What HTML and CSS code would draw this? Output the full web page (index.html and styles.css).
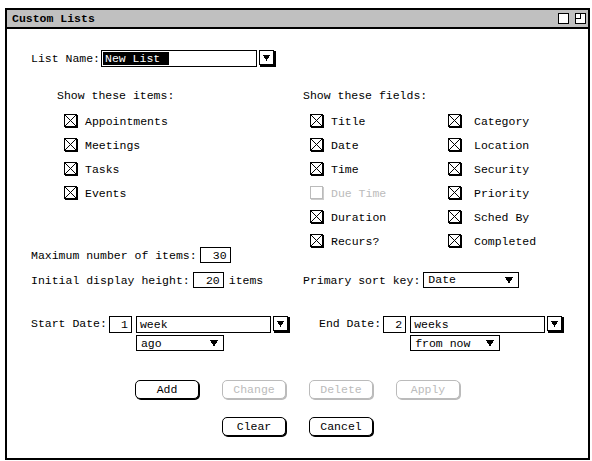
FILE: index.html
```html
<!DOCTYPE html>
<html lang="en">
<head>
    <meta charset="UTF-8">
    <title>Custom Lists</title>
    <link rel="stylesheet" href="styles.css">
</head>
<body>
    <div class="window">
        <div class="titlebar">
            <span class="title">Custom Lists</span>
            <span class="wicons">
                <svg width="11" height="11" viewBox="0 0 11 11"><rect x="0.5" y="0.5" width="10" height="10" fill="#fff" stroke="#000"/></svg>
                <svg width="11" height="11" viewBox="0 0 11 11"><rect x="0.5" y="0.5" width="10" height="10" fill="#fff" stroke="#000"/><path d="M5.5 0.5 V5.5 H0.5" fill="none" stroke="#000"/></svg>
            </span>
        </div>

        <div class="form">
            <div class="name-row">
                <span class="label">List Name:</span>
                <span class="field name-field"><span class="sel">New List</span></span>
                <span class="drop">
                    <svg width="17" height="17" viewBox="0 0 17 17"><rect x="0.5" y="0.5" width="14" height="14" fill="#fff" stroke="#000"/><rect x="15" y="1" width="2" height="16"/><rect x="1" y="15" width="16" height="2"/><polygon points="4,5 11,5 7.5,11"/></svg>
                </span>
            </div>

            <div class="main">
                <div class="left-top">
                    <div class="group">
                        <div class="group-head">Show these items:</div>
                        <div class="check"><svg class="cb" width="14" height="14" viewBox="0 0 14 14"><rect x="0.5" y="0.5" width="12" height="12" fill="#fff" stroke="#000"/><path d="M13.5 1 V14 M1 13.5 H14 M1 1 L12 12 M12 1 L1 12" stroke="#000" fill="none"/></svg>Appointments</div>
                        <div class="check"><svg class="cb" width="14" height="14" viewBox="0 0 14 14"><rect x="0.5" y="0.5" width="12" height="12" fill="#fff" stroke="#000"/><path d="M13.5 1 V14 M1 13.5 H14 M1 1 L12 12 M12 1 L1 12" stroke="#000" fill="none"/></svg>Meetings</div>
                        <div class="check"><svg class="cb" width="14" height="14" viewBox="0 0 14 14"><rect x="0.5" y="0.5" width="12" height="12" fill="#fff" stroke="#000"/><path d="M13.5 1 V14 M1 13.5 H14 M1 1 L12 12 M12 1 L1 12" stroke="#000" fill="none"/></svg>Tasks</div>
                        <div class="check"><svg class="cb" width="14" height="14" viewBox="0 0 14 14"><rect x="0.5" y="0.5" width="12" height="12" fill="#fff" stroke="#000"/><path d="M13.5 1 V14 M1 13.5 H14 M1 1 L12 12 M12 1 L1 12" stroke="#000" fill="none"/></svg>Events</div>
                    </div>
                    <div class="line max-row">
                        <span class="label">Maximum number of items:</span>
                        <span class="field num">30</span>
                    </div>
                </div>

                <div class="right-top">
                    <div class="group-head">Show these fields:</div>
                    <div class="fields">
                        <div class="check"><svg class="cb" width="14" height="14" viewBox="0 0 14 14"><rect x="0.5" y="0.5" width="12" height="12" fill="#fff" stroke="#000"/><path d="M13.5 1 V14 M1 13.5 H14 M1 1 L12 12 M12 1 L1 12" stroke="#000" fill="none"/></svg>Title</div>
                        <div class="check"><svg class="cb" width="14" height="14" viewBox="0 0 14 14"><rect x="0.5" y="0.5" width="12" height="12" fill="#fff" stroke="#000"/><path d="M13.5 1 V14 M1 13.5 H14 M1 1 L12 12 M12 1 L1 12" stroke="#000" fill="none"/></svg>Date</div>
                        <div class="check"><svg class="cb" width="14" height="14" viewBox="0 0 14 14"><rect x="0.5" y="0.5" width="12" height="12" fill="#fff" stroke="#000"/><path d="M13.5 1 V14 M1 13.5 H14 M1 1 L12 12 M12 1 L1 12" stroke="#000" fill="none"/></svg>Time</div>
                        <div class="check off"><svg class="cb" width="14" height="14" viewBox="0 0 14 14"><rect x="0.5" y="0.5" width="12" height="12" fill="#fff" stroke="#bbb"/><path d="M13.5 1 V14 M1 13.5 H14" stroke="#ccc" fill="none"/></svg>Due Time</div>
                        <div class="check"><svg class="cb" width="14" height="14" viewBox="0 0 14 14"><rect x="0.5" y="0.5" width="12" height="12" fill="#fff" stroke="#000"/><path d="M13.5 1 V14 M1 13.5 H14 M1 1 L12 12 M12 1 L1 12" stroke="#000" fill="none"/></svg>Duration</div>
                        <div class="check"><svg class="cb" width="14" height="14" viewBox="0 0 14 14"><rect x="0.5" y="0.5" width="12" height="12" fill="#fff" stroke="#000"/><path d="M13.5 1 V14 M1 13.5 H14 M1 1 L12 12 M12 1 L1 12" stroke="#000" fill="none"/></svg>Recurs?</div>
                        <div class="check wide"><svg class="cb" width="14" height="14" viewBox="0 0 14 14"><rect x="0.5" y="0.5" width="12" height="12" fill="#fff" stroke="#000"/><path d="M13.5 1 V14 M1 13.5 H14 M1 1 L12 12 M12 1 L1 12" stroke="#000" fill="none"/></svg>Category</div>
                        <div class="check wide"><svg class="cb" width="14" height="14" viewBox="0 0 14 14"><rect x="0.5" y="0.5" width="12" height="12" fill="#fff" stroke="#000"/><path d="M13.5 1 V14 M1 13.5 H14 M1 1 L12 12 M12 1 L1 12" stroke="#000" fill="none"/></svg>Location</div>
                        <div class="check wide"><svg class="cb" width="14" height="14" viewBox="0 0 14 14"><rect x="0.5" y="0.5" width="12" height="12" fill="#fff" stroke="#000"/><path d="M13.5 1 V14 M1 13.5 H14 M1 1 L12 12 M12 1 L1 12" stroke="#000" fill="none"/></svg>Security</div>
                        <div class="check wide"><svg class="cb" width="14" height="14" viewBox="0 0 14 14"><rect x="0.5" y="0.5" width="12" height="12" fill="#fff" stroke="#000"/><path d="M13.5 1 V14 M1 13.5 H14 M1 1 L12 12 M12 1 L1 12" stroke="#000" fill="none"/></svg>Priority</div>
                        <div class="check wide"><svg class="cb" width="14" height="14" viewBox="0 0 14 14"><rect x="0.5" y="0.5" width="12" height="12" fill="#fff" stroke="#000"/><path d="M13.5 1 V14 M1 13.5 H14 M1 1 L12 12 M12 1 L1 12" stroke="#000" fill="none"/></svg>Sched By</div>
                        <div class="check wide"><svg class="cb" width="14" height="14" viewBox="0 0 14 14"><rect x="0.5" y="0.5" width="12" height="12" fill="#fff" stroke="#000"/><path d="M13.5 1 V14 M1 13.5 H14 M1 1 L12 12 M12 1 L1 12" stroke="#000" fill="none"/></svg>Completed</div>
                    </div>
                </div>

                <div class="line row-b">
                    <span class="label">Initial display height:</span>
                    <span class="field num">20</span>
                    <span class="after">items</span>
                </div>
                <div class="line row-b">
                    <span class="label">Primary sort key:</span>
                    <span class="select sort-select">Date<svg width="8" height="7" viewBox="0 0 8 7"><polygon points="0,0 8,0 4,7"/></svg></span>
                </div>

                <div class="date-row">
                    <span class="label">Start Date:</span>
                    <span class="field count">1</span>
                    <div class="date-col">
                        <div class="unit-line">
                            <span class="field unit">week</span>
                            <span class="drop">
                                <svg width="17" height="17" viewBox="0 0 17 17"><rect x="0.5" y="0.5" width="14" height="14" fill="#fff" stroke="#000"/><rect x="15" y="1" width="2" height="16"/><rect x="1" y="15" width="16" height="2"/><polygon points="4,5 11,5 7.5,11"/></svg>
                            </span>
                        </div>
                        <span class="select ago-select">ago<svg width="8" height="7" viewBox="0 0 8 7"><polygon points="0,0 8,0 4,7"/></svg></span>
                    </div>
                </div>
                <div class="date-row end">
                    <span class="label">End Date:</span>
                    <span class="field count">2</span>
                    <div class="date-col">
                        <div class="unit-line">
                            <span class="field unit">weeks</span>
                            <span class="drop">
                                <svg width="17" height="17" viewBox="0 0 17 17"><rect x="0.5" y="0.5" width="14" height="14" fill="#fff" stroke="#000"/><rect x="15" y="1" width="2" height="16"/><rect x="1" y="15" width="16" height="2"/><polygon points="4,5 11,5 7.5,11"/></svg>
                            </span>
                        </div>
                        <span class="select now-select">from now<svg width="8" height="7" viewBox="0 0 8 7"><polygon points="0,0 8,0 4,7"/></svg></span>
                    </div>
                </div>
            </div>
        </div>

        <div class="buttons">
            <div class="btn-row">
                <button class="btn">Add</button>
                <button class="btn" disabled>Change</button>
                <button class="btn" disabled>Delete</button>
                <button class="btn" disabled>Apply</button>
            </div>
            <div class="btn-row second">
                <button class="btn">Clear</button>
                <button class="btn">Cancel</button>
            </div>
        </div>
    </div>
</body>
</html>
```

FILE: styles.css
```css
body {
    margin: 0;
    background-color: #fff;
    font-family: "Liberation Mono", "DejaVu Sans Mono", monospace;
    font-size: 11.5px;
    color: #000;
}
svg {
    display: block;
    shape-rendering: crispEdges;
}
.window {
    margin: 8px 0 0 5px;
    width: 585px;
    height: 452px;
    box-sizing: border-box;
    border: 2px solid #000;
    background-color: #fff;
}
.titlebar {
    height: 17px;
    display: flex;
    align-items: center;
    justify-content: space-between;
    padding: 0 2px 0 5px;
    background-color: #c0c0c0;
    border-bottom: 2px solid #000;
}
.title {
    font-weight: bold;
}
.wicons {
    display: flex;
    gap: 6px;
}
.form {
    padding: 21px 0 0 24px;
}
.name-row {
    display: flex;
    align-items: flex-start;
    height: 19px;
}
.label {
    margin-right: 3px;
}
.name-row .label {
    margin-top: 2px;
    margin-right: 1px;
}
.field {
    display: flex;
    align-items: center;
    box-sizing: border-box;
    height: 16px;
    border: 1px solid #000;
    background-color: #fff;
    padding: 0 3px;
}
.name-field {
    width: 156px;
    height: 17px;
    padding: 0 1px;
}
.sel {
    display: block;
    width: 64px;
    height: 13px;
    line-height: 13px;
    padding-left: 2px;
    background-color: #000;
    color: #fff;
}
.drop {
    margin-left: 2px;
}
.main {
    display: grid;
    grid-template-columns: 272px 1fr;
    margin-top: 15px;
}
.group {
    padding-left: 26px;
}
.group-head {
    height: 25px;
    line-height: 24px;
}
.check {
    display: flex;
    align-items: center;
    height: 24px;
    padding-left: 7px;
}
.cb {
    margin-right: 7px;
}
.check.off {
    color: #bbb;
}
.check.wide .cb {
    margin-right: 12px;
}
.fields {
    display: grid;
    grid-template-rows: repeat(6, 24px);
    grid-template-columns: 138px auto;
    grid-auto-flow: column;
    padding-left: 7px;
}
.fields .check {
    padding-left: 0;
}
.line {
    display: flex;
    align-items: center;
    height: 16px;
}
.max-row {
    margin-top: 42px;
}
.num {
    width: 31px;
    justify-content: flex-end;
}
.row-b {
    margin-top: 9px;
}
.after {
    margin-left: 5px;
}
.select {
    display: flex;
    align-items: center;
    justify-content: space-between;
    box-sizing: border-box;
    height: 16px;
    border: 1px solid #000;
    padding: 0 5px 0 4px;
}
.sort-select {
    width: 96px;
    align-items: flex-start;
}
.sort-select svg {
    margin-top: 4px;
}
.date-row {
    display: flex;
    align-items: flex-start;
    margin-top: 28px;
}
.date-row .label {
    margin-top: 1px;
    margin-right: 2px;
}
.date-row.end {
    padding-left: 16px;
}
.count {
    width: 23px;
    height: 17px;
    justify-content: flex-end;
    margin-right: 4px;
}
.date-col {
    display: flex;
    flex-direction: column;
    gap: 2px;
}
.unit-line {
    display: flex;
}
.unit {
    width: 135px;
    height: 17px;
    padding-left: 3px;
}
.unit-line .drop {
    margin-left: 2px;
}
.ago-select {
    width: 88px;
}
.now-select {
    width: 90px;
}
.buttons {
    margin-top: 29px;
}
.btn-row {
    display: flex;
    justify-content: center;
    gap: 23px;
}
.btn-row.second {
    margin-top: 18px;
}
.btn {
    width: 64px;
    height: 19px;
    padding: 0;
    font-family: inherit;
    font-size: 11.5px;
    color: #000;
    background-color: #fff;
    border: 1px solid #000;
    border-radius: 5px;
    box-shadow: 1px 1px 0 #000;
}
.btn:disabled {
    color: #bbb;
    border-color: #bbb;
    box-shadow: 1px 1px 0 #bbb;
}
```
